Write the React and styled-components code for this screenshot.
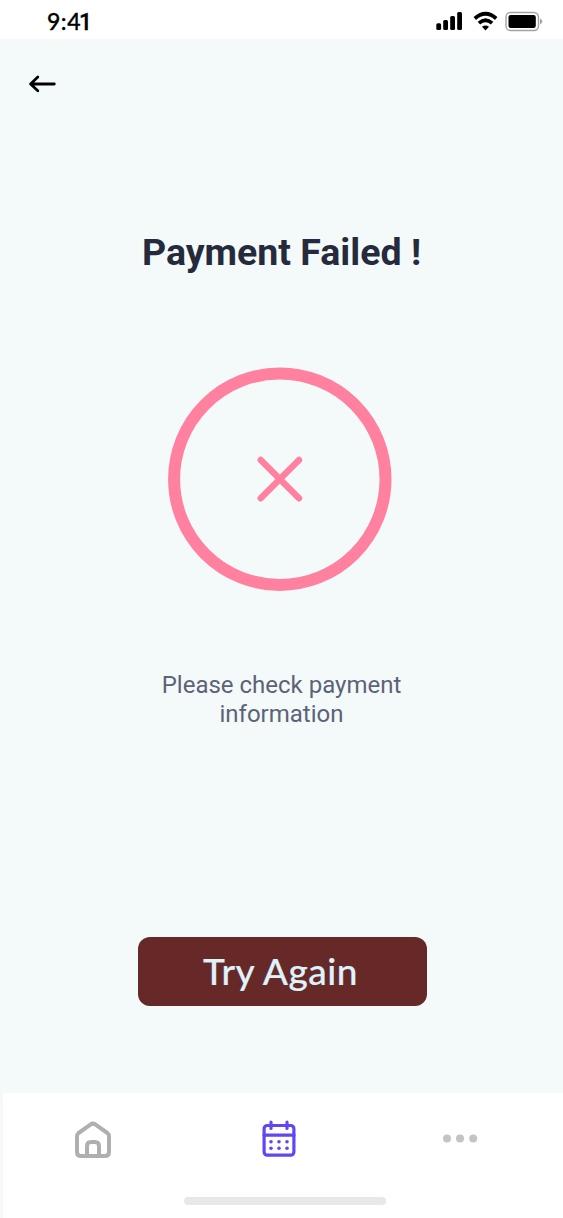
import React from 'react';
import styled, { createGlobalStyle } from 'styled-components';

const GlobalStyle = createGlobalStyle`
  * { box-sizing: border-box; }
  body { margin: 0; background: #f4fafa; font-family: Roboto, sans-serif; }
`;

const Screen = styled.div`
  width: 563px;
  height: 1218px;
  display: flex;
  flex-direction: column;
  overflow: hidden;
  background: #f4fafa;
`;

const StatusBar = styled.header`
  flex: none;
  height: 39px;
  padding: 0 20px 0 47px;
  display: flex;
  align-items: flex-start;
  justify-content: space-between;
  background: #fff;
`;

const Clock = styled.time`
  padding-top: 7px;
  font: 500 23px/28px Lato, sans-serif;
  letter-spacing: 0.5px;
  -webkit-text-stroke: 0.3px #000;
  color: #000;
`;

const NarrowDigit = styled.span`
  margin-left: -2px;
  font-family: Roboto, sans-serif;
`;

const StatusIcons = styled.svg`
  display: block;
  flex: none;
`;

const Content = styled.main`
  flex: none;
  height: 1054.4px;
  display: flex;
  flex-direction: column;
  align-items: center;
`;

const BackButton = styled.button`
  align-self: flex-start;
  margin: 33px 0 0 26px;
  padding: 0;
  width: 32px;
  height: 24px;
  border: 0;
  background: none;
  svg { display: block; }
`;

const Title = styled.h1`
  margin: 134px 0 0;
  font-size: 37.5px;
  line-height: 44px;
  font-weight: 700;
  color: #252b3d;
  white-space: nowrap;
`;

const FailureMark = styled.svg`
  display: block;
  margin: 93px 3px 0 0;
`;

const Message = styled.p`
  width: 280px;
  margin: 80px 0 0;
  font-size: 24px;
  line-height: 28.5px;
  text-align: center;
  color: #5c6378;
`;

const RetryButton = styled.button`
  width: 289px;
  height: 69px;
  margin: 209px 0 0 1px;
  padding: 0 3px 2px 0;
  border: 0;
  border-radius: 12px;
  background: #672828;
  color: #def2fc;
  font: 500 37px/67px Lato, sans-serif;
  letter-spacing: 0.5px;
  -webkit-text-stroke: 0.2px #def2fc;
  white-space: nowrap;
`;

const NavBar = styled.nav`
  flex: 1;
  margin-left: 3px;
  padding-top: 23.6px;
  display: flex;
  flex-direction: column;
  background: #fff;
`;

const NavItems = styled.div`
  height: 44px;
  padding-left: 69px;
  display: grid;
  grid-template-columns: 186px 182px 40px;
  align-items: center;
  svg { display: block; }
`;

const HomeIndicator = styled.div`
  width: 202px;
  height: 8px;
  margin: 36px 0 0 181px;
  border-radius: 4px;
  background: #e8e8e8;
`;

export default function App() {
  return (
    <Screen>
      <GlobalStyle />
      <StatusBar>
        <Clock>9:4<NarrowDigit>1</NarrowDigit></Clock>
        <StatusIcons width="108" height="39" viewBox="435 0 108 39">
          <rect x="436.3" y="23.3" width="4.8" height="6.7" rx="1.5" />
          <rect x="443.2" y="20" width="4.8" height="10" rx="1.5" />
          <rect x="450.2" y="16" width="4.8" height="14" rx="1.5" />
          <rect x="457.2" y="12" width="4.8" height="18" rx="1.5" />
          <g fill="none" stroke="#000" strokeWidth="3.7">
            <path d="M474.8 18.5Q485.5 9 496.2 18.5" />
            <path d="M478.9 23.2Q485.5 17.3 492.1 23.2" />
          </g>
          <path d="M482 26.8Q485.5 24 489 26.8L485.5 30.6Z" />
          <rect x="506" y="12.5" width="32.5" height="18" rx="4.5" fill="none" stroke="#a3a3a3" strokeWidth="1.4" />
          <rect x="508.5" y="15" width="27.3" height="13" rx="2.3" />
          <path d="M540 18.6Q542.3 20 542.3 21.6T540 24.6Z" fill="#a3a3a3" />
        </StatusIcons>
      </StatusBar>
      <Content>
        <BackButton aria-label="Back">
          <svg width="32" height="24" viewBox="0 0 32 24" fill="none" stroke="#000" strokeWidth="2.8" strokeLinecap="round" strokeLinejoin="round">
            <path d="M28.3 12H4.6M11.8 5L4.6 12L11.8 18.8" />
          </svg>
        </BackButton>
        <Title>Payment Failed !</Title>
        <FailureMark width="224" height="224" viewBox="0 0 224 224" fill="none" stroke="#ff819f">
          <circle cx="111.8" cy="112.2" r="105.7" strokeWidth="12" />
          <path d="M92.7 93L131 131.3M131 93L92.7 131.3" strokeWidth="6.4" strokeLinecap="round" />
        </FailureMark>
        <Message>Please check payment information</Message>
        <RetryButton>Try Again</RetryButton>
      </Content>
      <NavBar>
        <NavItems>
          <svg width="42" height="44" viewBox="72 1117 42 44" fill="none" stroke="#afafaf" strokeWidth="4" strokeLinejoin="round">
            <path d="M77 1136.3Q77 1134.3 78.6 1133L90.4 1124.6Q93 1122.7 95.6 1124.6L107.4 1133Q109 1134.3 109 1136.3V1152Q109 1156 105 1156H81Q77 1156 77 1152Z" />
            <path d="M87 1156V1146Q87 1142 91 1142H95Q99 1142 99 1146V1156" />
          </svg>
          <svg width="42" height="44" viewBox="258 1117 42 44" fill="none" stroke="#6146f2" strokeWidth="3.2" strokeLinecap="round">
            <rect x="264.1" y="1125.5" width="29.8" height="29.7" rx="3.2" />
            <path d="M264 1135.2H294M271 1122.2V1128.4M287 1122.2V1128.4" />
            <g fill="#6146f2" stroke="none">
              <circle cx="271" cy="1141.8" r="1.8" />
              <circle cx="279" cy="1141.8" r="1.8" />
              <circle cx="287" cy="1141.8" r="1.8" />
              <circle cx="271" cy="1148.3" r="1.8" />
              <circle cx="279" cy="1148.3" r="1.8" />
              <circle cx="287" cy="1148.3" r="1.8" />
            </g>
          </svg>
          <svg width="40" height="44" viewBox="440 1117 40 44" fill="#c4c4c4">
            <circle cx="447" cy="1138.5" r="4" />
            <circle cx="460" cy="1138.5" r="4" />
            <circle cx="473.2" cy="1138.5" r="4" />
          </svg>
        </NavItems>
        <HomeIndicator />
      </NavBar>
    </Screen>
  );
}
